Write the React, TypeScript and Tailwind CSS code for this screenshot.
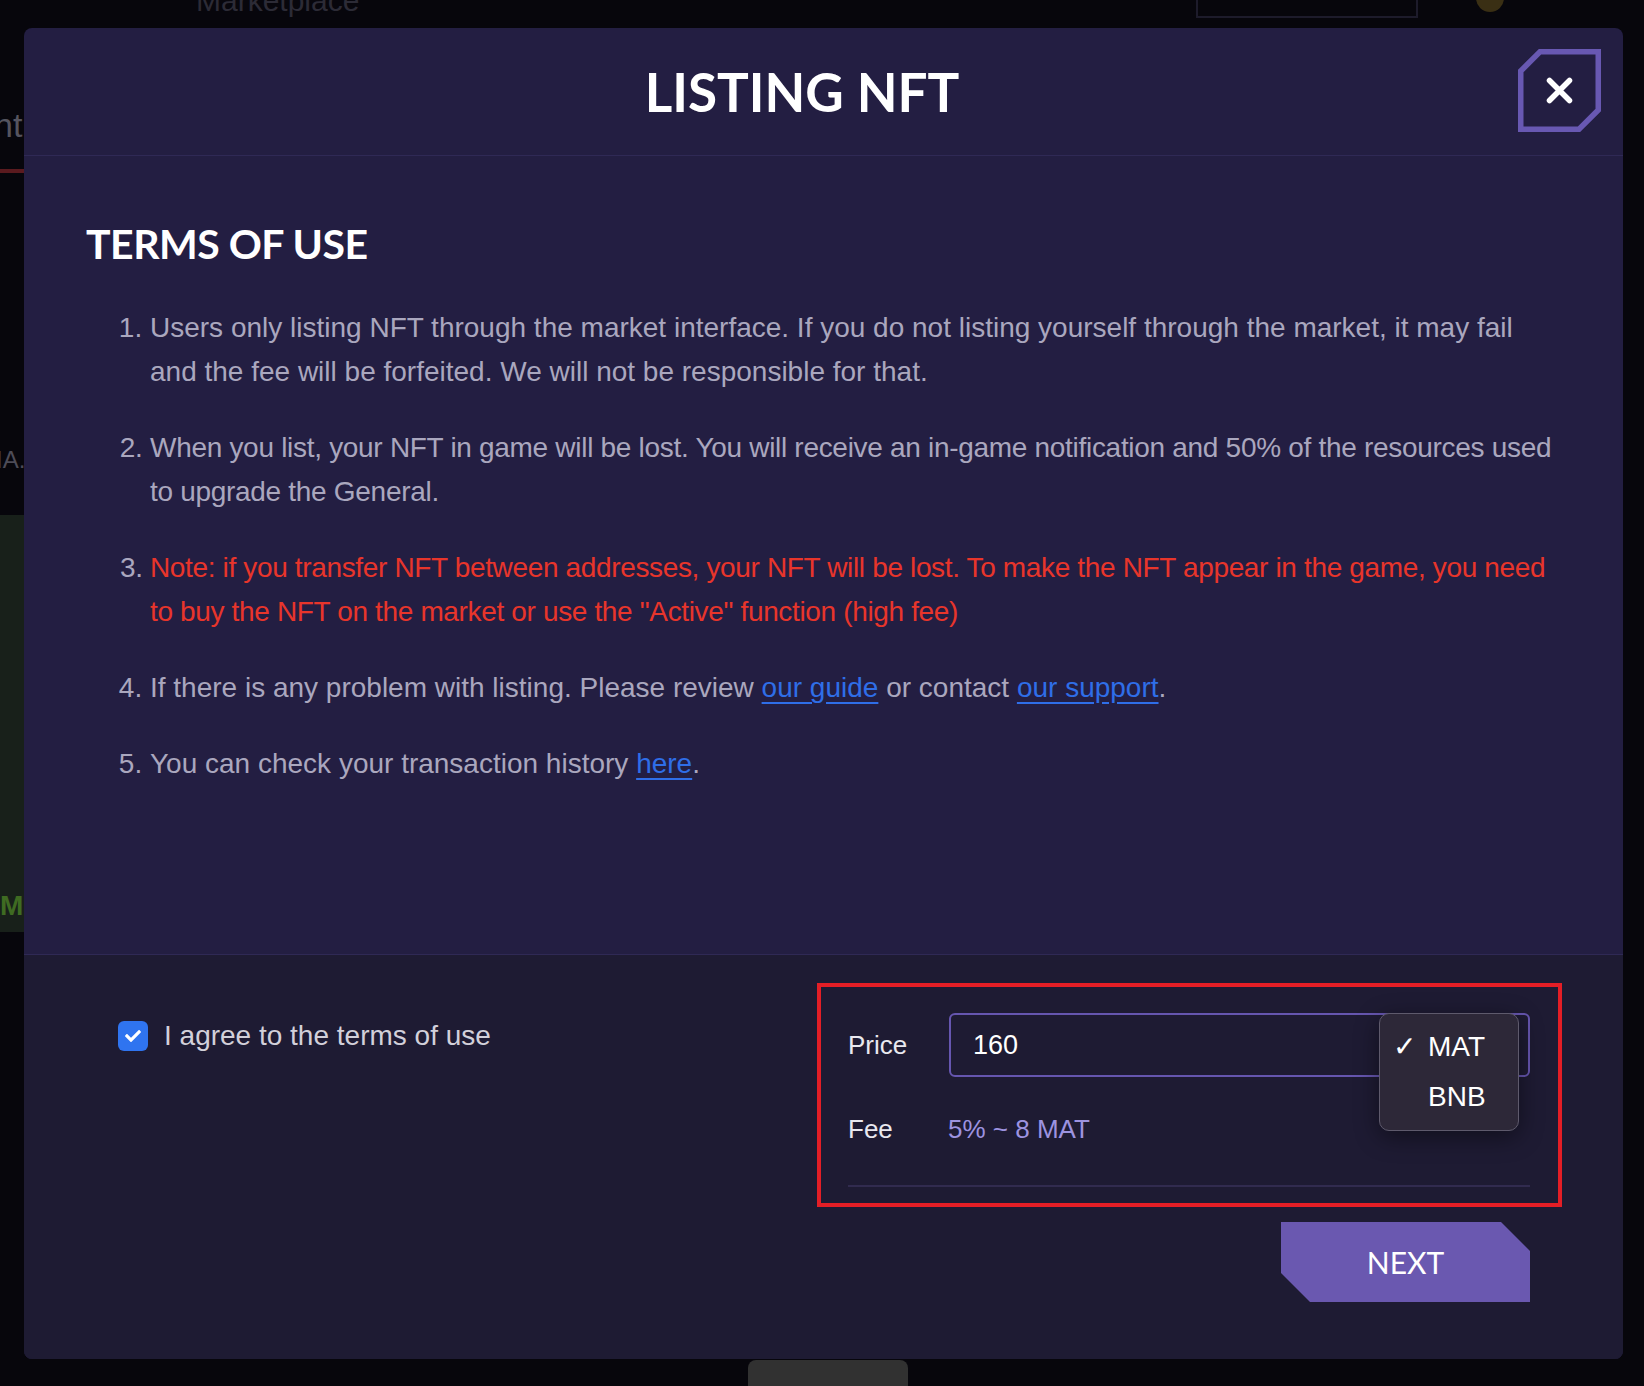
import { FaCheck } from "react-icons/fa";

const body = "font-['Liberation_Sans',Arial,sans-serif]";
const heading = "font-['Lato','Liberation_Sans',Arial,sans-serif]";

const CloseButton = () => (
  <button className="w-[83px] h-[83px] shrink-0 mr-[22px] mt-[-3px]">
    <svg width="83" height="83" viewBox="0 0 83 83">
      <polygon
        points="22,2.75 80.25,2.75 80.25,61 61,80.25 2.75,80.25 2.75,22"
        fill="none"
        stroke="#6858b2"
        strokeWidth="5.5"
      />
      <path
        d="M31.5 31.5 L51.5 51.5 M51.5 31.5 L31.5 51.5"
        stroke="#fff"
        strokeWidth="5.5"
        strokeLinecap="round"
      />
    </svg>
  </button>
);

const Terms = () => (
  <ol className="list-decimal pl-[64px] mt-[42px] text-[28px] leading-[44px] text-[#aaa7be] flex flex-col gap-[32px]">
    <li>
      Users only listing NFT through the market interface. If you do not listing yourself through the
      market, it may fail and the fee will be forfeited. We will not be responsible for that.
    </li>
    <li className="tracking-[-0.3px]">
      When you list, your NFT in game will be lost. You will receive an in-game notification and 50%
      of the resources used to upgrade the General.
    </li>
    <li className="tracking-[-0.35px]">
      <span className="text-[#e8352b]">
        Note: if you transfer NFT between addresses, your NFT will be lost. To make the NFT appear in
        the game, you need to buy the NFT on the market or use the "Active" function (high fee)
      </span>
    </li>
    <li>
      If there is any problem with listing. Please review{" "}
      <a className="text-[#2f6ee8] underline underline-offset-[5px]">our guide</a> or contact{" "}
      <a className="text-[#2f6ee8] underline underline-offset-[5px]">our support</a>.
    </li>
    <li>
      You can check your transaction history{" "}
      <a className="text-[#2f6ee8] underline underline-offset-[5px]">here</a>.
    </li>
  </ol>
);

const PriceBox = () => (
  <div className="w-[745px] h-[224px] border-[4px] border-[#e41e26] pt-[26px] pl-[27px] pr-[28px] pb-[16px] flex flex-col">
    <div className="flex items-center">
      <span className="w-[101px] text-[26px] text-[#e9e8ef]">Price</span>
      <div className="relative flex-1">
        <div className="h-[64px] rounded-[6px] border-2 border-[#6656b0] flex items-center pl-[22px] text-[27px] text-white">
          160
        </div>
        <div className="absolute left-[430px] top-0 w-[140px] h-[118px] rounded-[10px] border border-[#5e5a6c] bg-[#2d2838] shadow-[0_6px_24px_rgba(0,0,0,0.45)] py-[8px] text-[28px] text-white">
          <div className="h-[50px] flex items-center">
            <span className="w-[48px] pl-[13px] text-[28px]">✓</span>
            <span>MAT</span>
          </div>
          <div className="h-[50px] flex items-center">
            <span className="w-[48px]" />
            <span>BNB</span>
          </div>
        </div>
      </div>
    </div>
    <div className="flex items-center h-[40px] mt-[32px]">
      <span className="w-[100px] text-[26px] text-[#e9e8ef]">Fee</span>
      <span className="text-[26px] text-[#9d93e0]">5% ~ 8 MAT</span>
    </div>
    <div className="mt-auto h-[2px] bg-[#312b4f]" />
  </div>
);

export default function App() {
  return (
    <div className={`relative w-full min-h-[1386px] bg-[#07060c] overflow-hidden ${body}`}>
      {/* page behind the dialog */}
      <div className="absolute left-[196px] top-[-22px] text-[30px] text-[#2c2b36]">Marketplace</div>
      <div className="absolute left-[1196px] top-[-10px] w-[222px] h-[28px] border-[2px] border-t-0 border-[#1d1b2b]" />
      <div className="absolute left-[1476px] top-[-16px] w-[28px] h-[28px] rounded-full bg-[#3a2f14]" />
      <div className="absolute left-[-6px] top-[100px] text-[34px] text-[#55545f]">nt</div>
      <div className="absolute left-0 top-[169px] w-[24px] h-[4px] bg-[#5a1a1f]" />
      <div className="absolute left-[-4px] top-[442px] text-[24px] text-[#4d4c58]">IA.</div>
      <div className="absolute left-0 top-[515px] w-[24px] h-[417px] bg-[#18201a]" />
      <div className="absolute left-0 top-[885px] text-[28px] font-bold text-[#3f6b22]">M</div>
      <div className="absolute left-[748px] top-[1360px] w-[160px] h-[40px] rounded-[8px] bg-[#313131]" />

      <div className="relative pt-[28px] pl-[24px]">
        <div className="w-[1599px] h-[1331px] rounded-[8px] bg-[#231e42] flex flex-col overflow-hidden">
          <header className="h-[128px] shrink-0 border-b border-[#2f2955] flex items-center pl-[62px]">
            <h1 className={`flex-1 text-center text-[53px] leading-none font-bold text-white ${heading}`}>
              LISTING NFT
            </h1>
            <CloseButton />
          </header>

          <section className="h-[799px] shrink-0 border-b border-[#2f2955] px-[62px] pt-[67px]">
            <h2 className={`text-[41px] leading-none font-bold tracking-[-0.5px] text-white ${heading}`}>
              TERMS OF USE
            </h2>
            <Terms />
          </section>

          <footer className="flex-1 bg-[#1e1b33] flex justify-between pr-[61px]">
            <label className="flex items-center gap-[16px] h-[30px] mt-[66px] ml-[94px] text-[28px] text-[#d2d0da]">
              <span className="w-[30px] h-[30px] rounded-[6px] bg-[#2f74f0] flex items-center justify-center">
                <FaCheck className="text-white" size={16} />
              </span>
              I agree to the terms of use
            </label>
            <div className="flex flex-col items-end pt-[28px]">
              <PriceBox />
              <button
                className={`mt-[15px] mr-[32px] w-[249px] h-[80px] bg-[#6a58b0] text-white text-[30px] ${heading} [clip-path:polygon(0_0,calc(100%_-_29px)_0,100%_29px,100%_100%,29px_100%,0_calc(100%_-_29px))]`}
              >
                NEXT
              </button>
            </div>
          </footer>
        </div>
      </div>
    </div>
  );
}
